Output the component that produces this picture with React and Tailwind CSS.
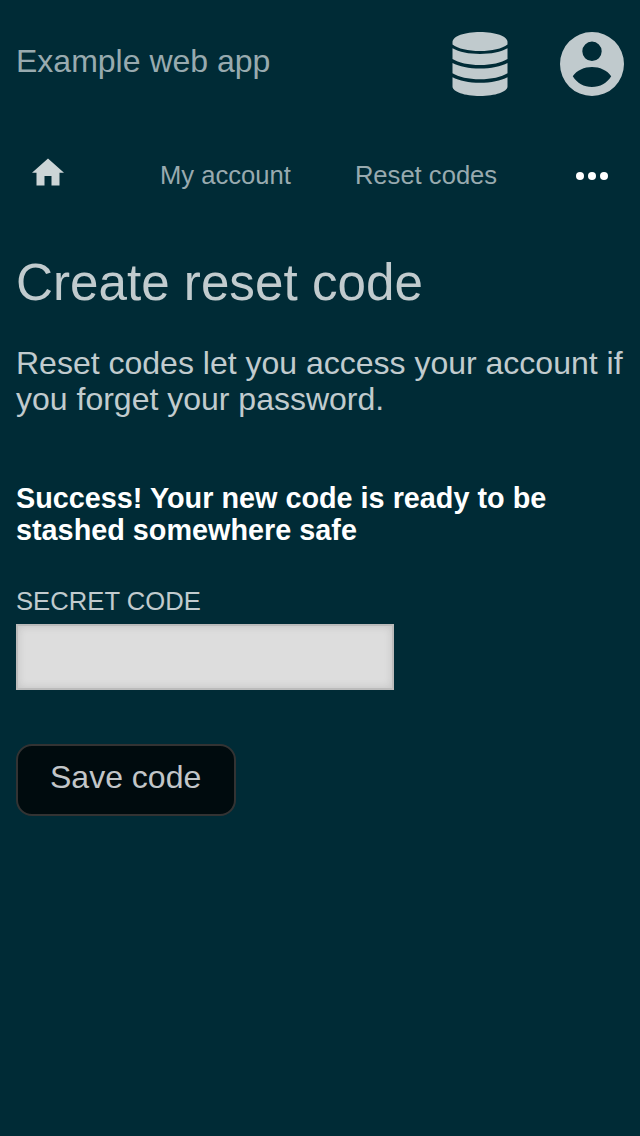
function DatabaseIcon() {
  return (
    <svg className="h-16 w-14" viewBox="0 0 56 64" fill="currentColor" aria-hidden="true">
      <path d="M0.5 10C0.5 4.2 12.7 0 28 0s27.5 4.2 27.5 10v2.500C50 16.800 40 19 28 19S6 16.800 0.500 12.500z" />
      <path d="M0.500 16.300C7 20 17 22 28 22s21-2 27.500-5.700V27C49.500 30.800 39.500 33 28 33S6.500 30.800 0.500 27z" />
      <path d="M0.500 30.900C7 34.400 17 36.400 28 36.400s21-2 27.500-5.500V41.300C49.500 45 39.500 47.300 28 47.300S6.500 45 0.500 41.300z" />
      <path d="M0.500 45.200C7 48.700 17 50.700 28 50.700s21-2 27.500-5.500V54.500C55.500 59.800 43.300 64 28 64S0.500 59.800 0.500 54.500z" />
    </svg>
  );
}

function AccountIcon() {
  return (
    <svg className="size-16" viewBox="0 0 64 64" fill="currentColor" fillRule="evenodd" aria-hidden="true">
      <path d="M32 0a32 32 0 1 1 0 64a32 32 0 1 1 0-64zM32 9.600a9.700 9.700 0 1 0 0 19.400a9.700 9.700 0 1 0 0-19.400zM12.800 44.200C17 51 24 55 32 55s15-4 19.200-10.800C47.500 38.200 39.500 34.900 32 34.900s-15.500 3.300-19.200 9.300z" />
    </svg>
  );
}

function HomeIcon() {
  return (
    <svg className="h-7 w-8" viewBox="0 0 32 28" fill="currentColor" aria-hidden="true">
      <path d="M16 0.500L32 14.700H27.500V27.500H19.500V18H12.500V27.500H4.500V14.700H0z" />
    </svg>
  );
}

export default function App() {
  return (
    <div className="flex min-h-screen w-[640px] flex-col bg-[#002b36] font-['Liberation_Sans',Arial,sans-serif] text-[32px] leading-[36px] text-[#c1cbce]">
      <header className="flex h-32 items-center justify-between px-4">
        <span className="pb-[6px] text-[#98aaaf]">Example web app</span>
        <div className="flex items-center gap-[52px] text-[#c0cacd]">
          <DatabaseIcon />
          <AccountIcon />
        </div>
      </header>
      <nav className="flex h-24 items-center text-[25.6px] text-[#98aaaf]">
        <a className="mb-2 ml-8 text-[#ccd5d7]"><HomeIcon /></a>
        <a className="mb-[2px] ml-24">My account</a>
        <a className="mb-[2px] ml-16">Reset codes</a>
        <svg className="ml-auto mr-8 h-8 w-8" viewBox="0 0 32 32" fill="#fff">
          <circle cx="4" cy="16" r="4" /><circle cx="16" cy="16" r="4" /><circle cx="28" cy="16" r="4" />
        </svg>
      </nav>
      <main className="flex flex-col items-start px-4 pt-[30px]">
        <h1 className="text-[51.2px] leading-[58px]">Create reset code</h1>
        <p className="mt-[33px]">Reset codes let you access your account if<br />you forget your password.</p>
        <p className="mt-[65px] text-[28.8px] font-bold leading-8 text-white">Success! Your new code is ready to be<br />stashed somewhere safe</p>
        <label htmlFor="code" className="mt-10 text-[25.6px] leading-[30px] tracking-[0.05px]">SECRET CODE</label>
        <input id="code" readOnly className="mt-2 h-[66px] w-[378px] border-2 border-[#bbb] bg-[#ddd] shadow-[inset_0_0_8px_rgba(0,0,0,0.12)] outline-none" />
        <button className="mt-[54px] h-[72px] w-[220px] rounded-2xl border-2 border-[#333] bg-[#000b0e] pl-8 text-left pb-[6px] text-[#c2c6c8]">Save code</button>
      </main>
    </div>
  );
}
